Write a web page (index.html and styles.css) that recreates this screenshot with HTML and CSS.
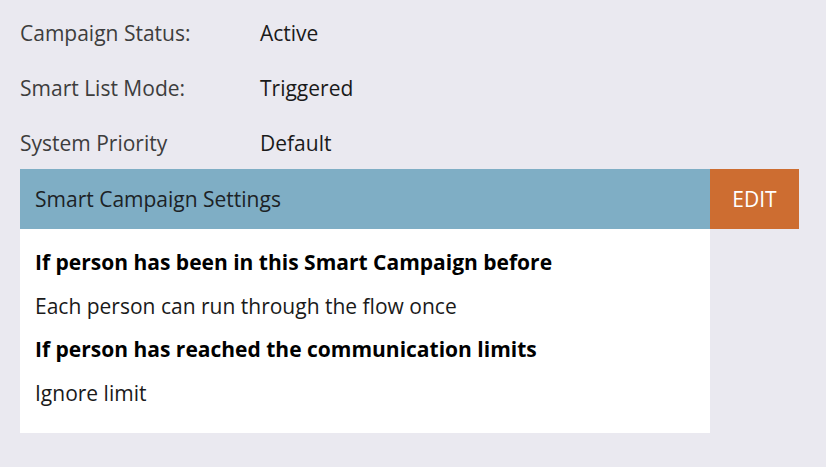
FILE: index.html
```html
<!DOCTYPE html>
<html>
<head>
<meta charset="utf-8">
<link rel="stylesheet" href="styles.css">
</head>
<body>
<div class="page">
  <div class="info">
    <div class="label">Campaign Status:</div><div class="value">Active</div>
    <div class="label">Smart List Mode:</div><div class="value">Triggered</div>
    <div class="label">System Priority</div><div class="value">Default</div>
  </div>
  <div class="settings">
    <div class="header">
      <div class="title">Smart Campaign Settings</div>
      <div class="edit">EDIT</div>
    </div>
    <div class="panel">
      <div class="line bold">If person has been in this Smart Campaign before</div>
      <div class="line">Each person can run through the flow once</div>
      <div class="line bold">If person has reached the communication limits</div>
      <div class="line">Ignore limit</div>
    </div>
  </div>
</div>
</body>
</html>
```

FILE: styles.css
```css
html, body {
  margin: 0;
  padding: 0;
  background: #eae9f0;
}
body {
  font-family: "Open Sans", "Liberation Sans", sans-serif;
  font-size: 21px;
  color: #1a1a1a;
}
.page {
  padding: 6px 27px 0 20px;
}
.info {
  display: grid;
  grid-template-columns: 240px 1fr;
  grid-template-rows: 55px 55px 53px;
  align-items: start;
  line-height: 55px;
}
.label {
  color: #3d3d3d;
}
.value {
  color: #1a1a1a;
}
.settings {
  width: 779px;
}
.header {
  display: flex;
  height: 60px;
}
.title {
  flex: 1;
  background: #7faec5;
  display: flex;
  align-items: center;
  padding-left: 15px;
  color: #1c2226;
}
.edit {
  width: 89px;
  background: #cd6d31;
  color: #ffffff;
  display: flex;
  align-items: center;
  justify-content: center;
}
.panel {
  width: 690px;
  box-sizing: border-box;
  background: #ffffff;
  padding: 12px 15px 18px;
}
.line {
  line-height: 43.5px;
  color: #1a1a1a;
}
.bold {
  font-weight: 700;
  color: #000;
}
```
